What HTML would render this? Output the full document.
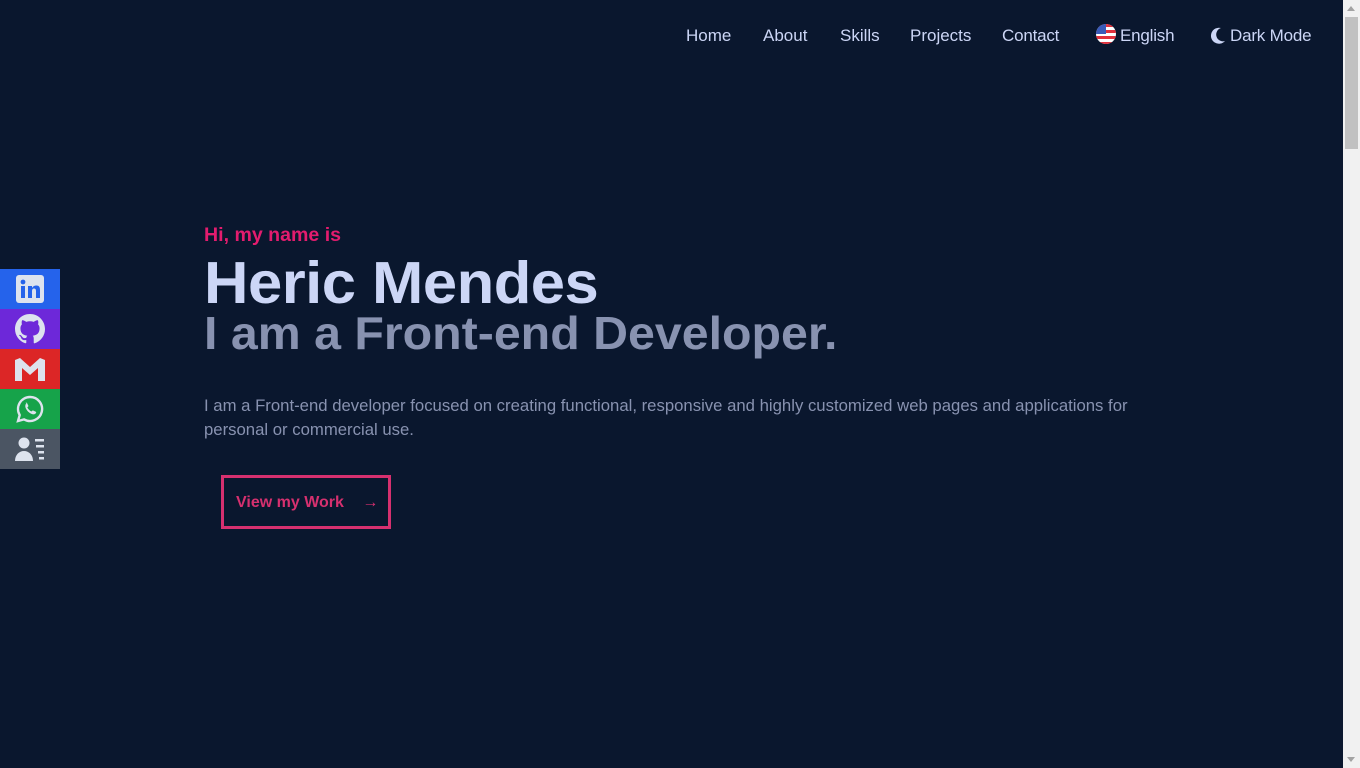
<!DOCTYPE html>
<html><head><meta charset="utf-8"><style>
*{margin:0;padding:0;box-sizing:border-box}
html,body{width:1360px;height:768px;overflow:hidden;background:#0a172e;font-family:"Liberation Sans",sans-serif}
nav{position:absolute;top:26px;height:20px;font-size:17px;color:#ccd6f6}
nav span{position:absolute;white-space:nowrap;top:0}
.sb{position:absolute;left:1343px;top:0;width:17px;height:768px;background:#f1f1f1}
.thumb{position:absolute;left:2px;top:17px;width:13px;height:132px;background:#c1c1c1}
.arr{position:absolute;left:4px;top:6px;border-left:4.5px solid transparent;border-right:4.5px solid transparent;border-bottom:5px solid #a3a3a3}
.arr2{position:absolute;left:4px;top:757px;border-left:4.5px solid transparent;border-right:4.5px solid transparent;border-top:5px solid #a3a3a3}
.soc{position:absolute;left:0;width:60px;height:40px;display:flex;align-items:center;justify-content:center}
.t{position:absolute;left:204px;white-space:nowrap;transform-origin:left top}
</style></head><body>
<nav>
<span style="left:686px">Home</span>
<span style="left:763px">About</span>
<span style="left:840px">Skills</span>
<span style="left:910px">Projects</span>
<span style="left:1002px;letter-spacing:-0.2px">Contact</span>
<span style="left:1096px;top:-2px"><svg width="20" height="20" viewBox="0 0 20 20"><defs><clipPath id="c"><circle cx="10" cy="10" r="10"/></clipPath></defs><g clip-path="url(#c)"><rect width="20" height="20" fill="#fff"/><rect y="0" width="20" height="3" fill="#e0303c"/><rect y="6" width="20" height="3" fill="#e0303c"/><rect y="12" width="20" height="3" fill="#e0303c"/><rect y="18" width="20" height="3" fill="#e0303c"/><rect width="10" height="10" fill="#3a5bb8"/></g></svg></span>
<span style="left:1120px;letter-spacing:-0.2px">English</span>
<span style="left:1210px;top:1px"><svg width="16" height="17" viewBox="0 0 16 17"><path d="M11 1A8 8 0 1 0 15 14A6.5 6.5 0 0 1 11 1Z" fill="#ccd6f6"/></svg></span>
<span style="left:1230px;letter-spacing:-0.2px">Dark Mode</span>
</nav>

<div class="t" style="top:225px;font-size:19px;font-weight:bold;color:#e31c6e;transform:scaleX(1.03)">Hi, my name is</div>
<div class="t" style="top:249px;font-size:59px;font-weight:bold;color:#ccd6f6;letter-spacing:-0.5px;transform:scaleX(1.044)">Heric Mendes</div>
<div class="t" style="top:306px;font-size:46px;font-weight:bold;color:#8892b0;transform:scaleX(1.05)">I am a Front-end Developer.</div>
<div class="t" style="top:394px;font-size:16.5px;color:#8892b0;line-height:24px;transform:scaleX(1.013)">I am a Front-end developer focused on creating functional, responsive and highly customized web pages and applications for<br>personal or commercial use.</div>
<div style="position:absolute;left:221px;top:475px;width:170px;height:54px;border:3px solid #d6306f;color:#d6306f;font-size:16px;font-weight:bold;padding:16px 0 0 12px;white-space:nowrap">View my Work <span style="margin-left:14px;font-weight:normal">→</span></div>

<div class="soc" style="top:269px;background:#2563eb"><svg width="28" height="28" viewBox="0 0 28 28"><rect width="28" height="28" rx="3" fill="#dde3ee"/><rect x="5" y="11" width="4" height="12" fill="#2563eb"/><circle cx="7" cy="7" r="2.4" fill="#2563eb"/><path d="M12 11h4v2c1-2 3-2.5 4.5-2.5C23 10.5 24 12 24 15v8h-4v-7c0-1.7-.6-2.5-2-2.5s-2 1-2 2.5v7h-4z" fill="#2563eb"/></svg></div>
<div class="soc" style="top:309px;background:#6d28d9"><svg width="30" height="30" viewBox="0 0 16 16"><path fill="#dde3ee" d="M8 0C3.58 0 0 3.58 0 8c0 3.54 2.290 6.53 5.47 7.59.4.07.55-.17.55-.38v-1.34c-2.23.48-2.7-1.07-2.7-1.070-.36-.92-.89-1.17-.89-1.170-.73-.5.05-.49.05-.49.8.06 1.23.83 1.23.83.72 1.23 1.87.87 2.33.67.07-.52.28-.87.5-1.07-1.78-.2-3.64-.89-3.64-3.95 0-.87.31-1.59.82-2.15-.08-.2-.36-1.02.08-2.12 0 0 .67-.21 2.2.82a7.6 7.6 0 0 1 4 0c1.53-1.04 2.2-.82 2.2-.82.44 1.1.16 1.92.08 2.12.51.56.82 1.27.82 2.15 0 3.07-1.87 3.75-3.65 3.95.29.25.54.73.54 1.48v2.2c0 .21.15.46.55.38A8 8 0 0 0 16 8c0-4.42-3.58-8-8-8z"/></svg></div>
<div class="soc" style="top:349px;background:#dc2626"><svg width="32" height="24" viewBox="0 0 32 24"><path d="M1 3v21h7V11l8 7 8-7v13h7V3l-5-2-10 9L6 1z" fill="#dde3ee"/></svg></div>
<div class="soc" style="top:389px;background:#16a34a"><svg width="28" height="28" viewBox="0 0 28 28"><path d="M14 2a12 12 0 0 0-10.3 18.1L2 26l6.1-1.6A12 12 0 1 0 14 2z" fill="none" stroke="#dde3ee" stroke-width="2.4"/><path d="M9.5 8c.5-.5 1.2-.5 1.5 0l1.3 2.6c.2.4 0 .8-.3 1.1l-.7.7c.8 1.7 2.300 3.2 4.1 4.1l.7-.7c.3-.3.7-.4 1.1-.3l2.6 1.2c.5.3.5 1 0 1.5-1 1.2-2.5 1.4-4 .8-2.8-1.1-5-3.3-6.2-6.1-.6-1.6-.4-3.4.9-4.9z" fill="#dde3ee"/></svg></div>
<div class="soc" style="top:429px;background:#4b5563"><svg width="30" height="26" viewBox="0 0 30 26"><circle cx="9" cy="7" r="5.5" fill="#dde3ee"/><path d="M0 25c0-6 4-10 9-10s9 4 9 10z" fill="#dde3ee"/><rect x="20" y="3" width="9" height="2.5" fill="#dde3ee"/><rect x="21" y="9" width="8" height="2.5" fill="#dde3ee"/><rect x="23" y="15" width="6" height="2.5" fill="#dde3ee"/><rect x="24" y="21" width="5" height="2.5" fill="#dde3ee"/></svg></div>

<div class="sb"><div class="arr"></div><div class="thumb"></div><div class="arr2"></div></div>
</body></html>
